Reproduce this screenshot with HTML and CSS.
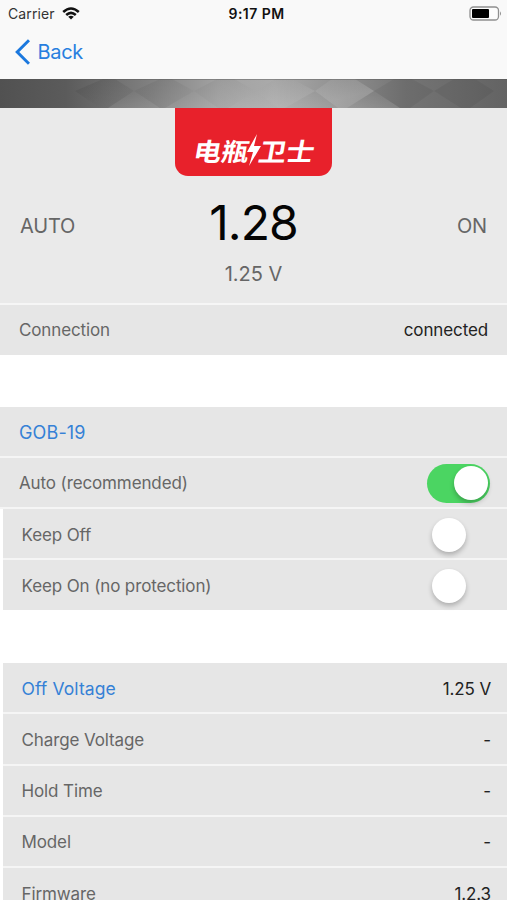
FILE: index.html
```html
<!DOCTYPE html>
<html lang="en">
<head>
<meta charset="utf-8">
<title>Battery Guard</title>
<link rel="stylesheet" href="styles.css">
</head>
<body>
<header class="top">
  <div class="status">
    <div class="carrier"><span class="carrier-name">Carrier</span>
      <svg class="wifi" viewBox="0 0 18 13" width="18" height="13"><g fill="none" stroke="#111" stroke-width="2.5"><path d="M1.2 5Q9-2 16.8 5"/><path d="M4.2 8Q9 3.7 13.8 8"/></g><path d="M6.2 9.8Q9 7.5 11.8 9.8L9 12.6Z" fill="#111"/></svg>
    </div>
    <div class="clock">9:17 PM</div>
    <svg class="battery" viewBox="0 0 33 15" width="33" height="15"><rect x="1" y="1" width="28.5" height="13" rx="3.5" fill="#fcfcfc" stroke="#8f8f8f" stroke-width="1.3"/><rect x="3" y="3" width="17" height="9" rx="1" fill="#000"/><path d="M31 5.2Q33 7.5 31 9.8Z" fill="#8f8f8f"/></svg>
  </div>
  <nav class="nav"><a class="back"><svg viewBox="0 0 16 26" width="16" height="26"><path d="M15 1.2L3.2 13L15 24.8" fill="none" stroke="#1b78de" stroke-width="3"/></svg><span class="back-text">Back</span></a></nav>
</header>
<svg class="strip" viewBox="0 0 507 29" width="507" height="29" preserveAspectRatio="none">
  <defs>
    <linearGradient id="metal"><stop offset="0" stop-color="#515151"/><stop offset=".13" stop-color="#5b5b5b"/><stop offset=".3" stop-color="#818181"/><stop offset=".43" stop-color="#a2a2a2"/><stop offset=".54" stop-color="#aaa"/><stop offset=".66" stop-color="#929292"/><stop offset=".8" stop-color="#747474"/><stop offset="1" stop-color="#636363"/></linearGradient>
    <linearGradient id="diamond" x1="0" y1="0" x2="1" y2=".4"><stop offset="0" stop-color="#000" stop-opacity=".09"/><stop offset="1" stop-color="#fff" stop-opacity=".17"/></linearGradient>
    <linearGradient id="facet" x1="0" y1="0" x2="0" y2="1"><stop offset="0" stop-color="#fff" stop-opacity="0"/><stop offset="1" stop-color="#fff" stop-opacity=".1"/></linearGradient>
  </defs>
  <rect width="507" height="29" fill="url(#metal)"/>
  <path d="M75 12L103 0H115L134 12L108 29H100ZM134 12L160 0H172L194 12L165 29H160ZM194 12L217 0H234L256 12L228 29H218ZM256 12L275 0H292L315 12L285 29H278ZM315 12L332 0H355L374 12L347 29H338Z" fill="url(#diamond)"/>
  <path d="M108 29L134 12L160 29ZM165 29L194 12L218 29ZM228 29L256 12L278 29ZM285 29L315 12L338 29ZM347 29L374 12L400 29Z" fill="url(#facet)"/>
  <path d="M374 12L394 0H412L434 12L410 29H400ZM434 12L454 0H475L494 12L470 29H461Z" fill="#000" opacity=".055"/>
  <path d="M0 .5H507" stroke="#555" stroke-opacity=".4"/>
</svg>
<main>
  <section class="hero">
    <div class="logo" lang="zh-CN"><span class="logo-text">电瓶</span><svg class="bolt" viewBox="0 0 14 32" width="14" height="32"><path d="M10 0L0 18H6L2 32L14 12H7Z" fill="#fff"/></svg><span class="logo-text">卫士</span></div>
    <div class="reading"><span class="mode">AUTO</span><span class="volts">1.28</span><span class="mode state">ON</span></div>
    <div class="cutoff">1.25 V</div>
  </section>
  <section class="group connection"><div class="row"><span class="label">Connection</span><span class="value">connected</span></div></section>
  <section class="group device">
    <div class="row"><span class="label link model">GOB-19</span></div>
    <div class="row"><span class="label">Auto (recommended)</span><span class="switch on"><span class="knob"></span></span></div>
    <div class="row inset"><span class="label">Keep Off</span><span class="switch"><span class="knob"></span></span></div>
    <div class="row inset"><span class="label">Keep On (no protection)</span><span class="switch"><span class="knob"></span></span></div>
  </section>
  <section class="group details">
    <div class="row inset"><span class="label link voltage">Off Voltage</span><span class="value">1.25 V</span></div>
    <div class="row inset"><span class="label">Charge Voltage</span><span class="value">-</span></div>
    <div class="row inset"><span class="label">Hold Time</span><span class="value">-</span></div>
    <div class="row inset"><span class="label">Model</span><span class="value">-</span></div>
    <div class="row inset"><span class="label">Firmware</span><span class="value">1.2.3</span></div>
  </section>
</main>
</body>
</html>
```
FILE: styles.css
```css
* { box-sizing: border-box; }
html { height: 900px; overflow: hidden; }
body { margin: 0; width: 507px; height: 900px; overflow: hidden; background: #fff; color: #111; font-family: Inter, "Noto Sans CJK SC", sans-serif; }
svg { display: block; flex: none; }
.top { height: 79px; background: #f9f9f9; }
.status { height: 27px; display: grid; grid-template-columns: 1fr auto 1fr; align-items: center; padding: 0 5px 0 8px; }
.carrier { display: flex; align-items: center; gap: 7px; font-size: 14px; letter-spacing: .1px; color: #333; }
.clock { font-size: 14px; font-weight: 600; letter-spacing: .45px; padding-left: 3px; }
.battery { justify-self: end; }
.nav { height: 52px; padding: 12px 0 0 14px; }
.back { display: flex; align-items: center; height: 26px; gap: 7.5px; color: #287fdf; font-size: 20px; letter-spacing: -.3px; }
.strip { width: 507px; height: 29px; }
.hero { height: 195px; background: #eaeaea; display: flex; flex-direction: column; align-items: center; }
.logo { width: 157px; height: 68px; border-radius: 0 0 13px 13px; background: #e8212b; display: flex; justify-content: center; padding-top: 26px; }
.logo-text { color: #fff; font: 700 27px/32px "Noto Sans CJK SC", sans-serif; transform: skewX(-10deg) scale(1.03, .93); }
.bolt { margin: 0 -1.5px; }
.reading { width: 100%; height: 94px; padding: 0 20px; display: grid; grid-template-columns: 1fr auto 1fr; align-items: center; }
.mode { font-size: 20px; color: #666; letter-spacing: -.2px; padding-top: 5px; }
.state { text-align: right; }
.volts { font-size: 48px; line-height: 58px; color: #050505; letter-spacing: -1px; }
.cutoff { color: #666; font-size: 20px; line-height: 24px; margin-top: -8px; }
.group { background: #fff; }
.connection { height: 52px; padding-top: 2px; background: #f6f6f6; }
.device { margin-top: 51.5px; }
.details { margin-top: 51.5px; }
.row { height: 51.25px; border-bottom: 2px solid #f5f5f5; background: #e6e6e6; display: flex; align-items: center; justify-content: space-between; padding: 2.2px 19px 0; font-size: 17px; letter-spacing: -.12px; }
.row:last-child { border-bottom-color: #fff; }
.connection .row { height: 50px; border: 0; padding-top: 0; }
.inset { margin-left: 3px; padding: 2.2px 16px 0 18.5px; }
.label { color: #666; }
.link { color: #3581d6; }
.model { font-size: 18px; letter-spacing: .15px; }
.voltage { font-size: 17.5px; letter-spacing: .1px; }
.value { color: #222; }
.switch { width: 63px; height: 39px; border-radius: 20px; display: flex; align-items: center; padding: 0 5px; margin-right: -2px; }
.inset .switch { margin-right: 0; padding-left: 4px; }
.switch.on { background: #4bd562; justify-content: flex-end; padding-right: 2px; }
.knob { width: 34px; height: 34px; border-radius: 50%; background: #fff; box-shadow: 0 3px 5px rgba(0, 0, 0, .24); }
```
